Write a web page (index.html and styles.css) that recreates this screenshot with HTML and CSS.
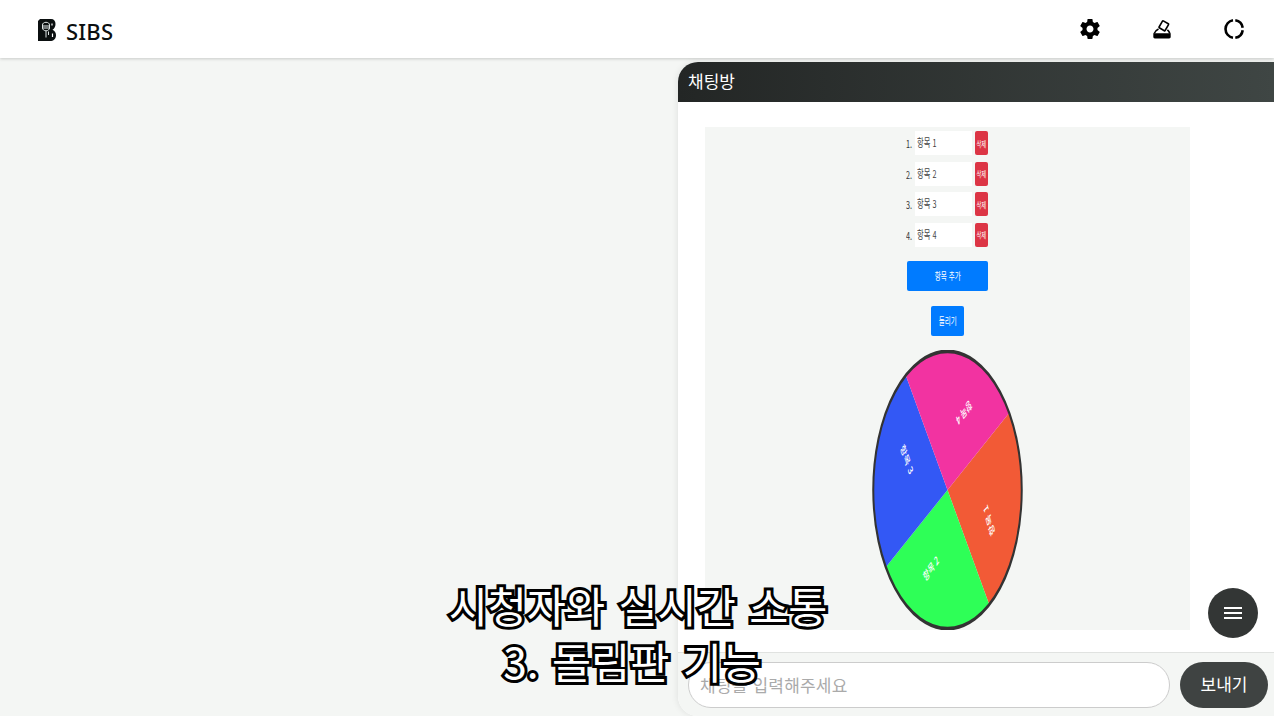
FILE: index.html
```html
<!DOCTYPE html>
<html lang="ko">
<head>
<meta charset="utf-8">
<title>SIBS</title>
<link rel="stylesheet" href="styles.css">
</head>
<body>
<header class="topbar">
  <div class="brand">
    <svg class="logo" viewBox="0 0 18 22" aria-hidden="true">
      <path d="M2 0H13C16 0 17.500 2 17.500 5C17.500 7.500 16.500 9.500 14.500 10.800C16.800 11.800 18 13.800 18 16.200C18 19.800 15.500 22 12 22H0V2Z" fill="#0b0f10"/>
      <path d="M4.500 6C4.500 4.300 6 3.300 8 3.300C10 3.300 11.500 4.300 11.500 6V9C11.500 10.500 10 11.800 8 11.800C6 11.800 4.500 10.500 4.500 9ZM4.500 7H11.500M4.500 9H11.500M8 12V18.500M10.500 12.500V16" fill="none" stroke="#dfe6e6" stroke-width="1"/>
      <path d="M14 4.500V6.500M14.500 14.500V18" fill="none" stroke="#fff" stroke-width="1.200"/>
    </svg>
    <span class="brand-name">SIBS</span>
  </div>
  <nav class="top-icons">
    <svg class="top-icon" viewBox="0 0 24 24" aria-hidden="true"><path fill="#000" fill-rule="evenodd" d="M19.430 12.980c.040-.320.070-.640.070-.980s-.030-.660-.070-.980l2.110-1.650c.190-.150.240-.420.120-.640l-2-3.460c-.120-.220-.390-.300-.610-.220l-2.490 1c-.520-.400-1.080-.730-1.690-.980l-.380-2.650C14.460 2.180 14.250 2 14 2h-4c-.250 0-.460.180-.490.420l-.380 2.650c-.610.250-1.170.590-1.690.980l-2.490-1c-.230-.090-.490 0-.610.220l-2 3.460c-.130.220-.070.490.120.640l2.110 1.650c-.040.320-.070.650-.070.980s.030.660.070.980l-2.110 1.650c-.190.150-.240.420-.120.640l2 3.460c.120.220.390.300.610.220l2.490-1c.520.400 1.080.730 1.690.980l.380 2.650c.030.240.240.420.490.420h4c.250 0 .460-.180.490-.420l.380-2.650c.610-.250 1.170-.590 1.690-.980l2.490 1c.230.090.490 0 .610-.220l2-3.460c.120-.220.070-.490-.120-.640zM12 15.500c-1.930 0-3.500-1.570-3.500-3.500s1.570-3.500 3.500-3.500 3.500 1.570 3.500 3.500-1.570 3.500-3.500 3.500z"/></svg>
    <svg class="top-icon" viewBox="0 0 24 24" aria-hidden="true">
      <rect x="10.300" y="4.800" width="7" height="8" rx=".6" transform="rotate(30 13.800 8.800)" fill="none" stroke="#000" stroke-width="1.600"/>
      <path d="M4.200 16.500C4.800 14.500 6.500 13 8.500 12M19.800 16.500C19.400 15 18.600 13.800 17.400 12.800" fill="none" stroke="#000" stroke-width="1.600"/>
      <path d="M3.300 16.300H20.700V20C20.700 20.800 20 21.400 19.200 21.400H4.800C4 21.400 3.300 20.800 3.300 20Z" fill="#000"/>
    </svg>
    <svg class="top-icon" viewBox="0 0 24 24" aria-hidden="true">
      <path d="M11 3.300A8.800 8.800 0 0 0 11 20.700" fill="none" stroke="#000" stroke-width="2.600"/>
      <path d="M13.300 3.300A8.800 8.800 0 0 1 20.700 10.800" fill="none" stroke="#000" stroke-width="2.600"/>
      <path d="M20.700 13.200A8.800 8.800 0 0 1 13.300 20.700" fill="none" stroke="#000" stroke-width="2.600"/>
    </svg>
  </nav>
</header>

<main class="stage">
  <section class="chat">
    <div class="chat-head">채팅방</div>
    <div class="chat-body">
      <div class="roulette">
        <ol class="items">
          <li class="item"><span class="num"><span class="squeeze">1.</span></span><span class="field"><span class="squeeze">항목 1</span></span><span class="del"><span class="squeeze">삭제</span></span></li>
          <li class="item"><span class="num"><span class="squeeze">2.</span></span><span class="field"><span class="squeeze">항목 2</span></span><span class="del"><span class="squeeze">삭제</span></span></li>
          <li class="item"><span class="num"><span class="squeeze">3.</span></span><span class="field"><span class="squeeze">항목 3</span></span><span class="del"><span class="squeeze">삭제</span></span></li>
          <li class="item"><span class="num"><span class="squeeze">4.</span></span><span class="field"><span class="squeeze">항목 4</span></span><span class="del"><span class="squeeze">삭제</span></span></li>
        </ol>
        <div class="btn btn-add"><span class="squeeze">항목 추가</span></div>
        <div class="btn btn-spin"><span class="squeeze">돌리기</span></div>
        <svg class="wheel" viewBox="0 0 300 300" preserveAspectRatio="none" aria-hidden="true">
          <path d="M150 150L272.700 67.200A148 148 0 0 1 232.800 272.700Z" fill="#f25a36"/>
          <path d="M150 150L232.800 272.700A148 148 0 0 1 27.300 232.800Z" fill="#2eff57"/>
          <path d="M150 150L27.300 232.800A148 148 0 0 1 67.200 27.300Z" fill="#3358f5"/>
          <path d="M150 150L67.200 27.300A148 148 0 0 1 272.700 67.200Z" fill="#f233a1"/>
          <ellipse cx="150" cy="150" rx="147.500" ry="148.500" fill="none" stroke="#333" stroke-width="4"/>
          <text class="wheel-label" transform="translate(234 182) rotate(243)">항목 1</text>
          <text class="wheel-label" transform="translate(118 235) rotate(322)">항목 2</text>
          <text class="wheel-label" transform="translate(68 118) rotate(58)">항목 3</text>
          <text class="wheel-label" transform="translate(182 66) rotate(145)">항목 4</text>
        </svg>
      </div>
    </div>
    <button class="fab" type="button" aria-label="메뉴"><span class="fab-line"></span><span class="fab-line"></span><span class="fab-line"></span></button>
    <div class="composer">
      <div class="composer-input">채팅을 입력해주세요</div>
      <div class="composer-send">보내기</div>
    </div>
  </section>
  <div class="caption">
    <div>시청자와 실시간 소통</div>
    <div class="caption-second">3. 돌림판 기능</div>
  </div>
</main>
</body>
</html>
```

FILE: styles.css
```css
* { box-sizing: border-box; }
html, body { height: 100%; }
body {
  margin: 0;
  height: 716px;
  overflow: hidden;
  display: flex;
  flex-direction: column;
  background: #f4f6f4;
  font-family: "Noto Sans CJK KR", "Noto Sans", sans-serif;
}
.topbar {
  flex: none;
  height: 58px;
  background: #fff;
  box-shadow: 0 1px 3px rgba(0, 0, 0, .18);
  display: flex;
  align-items: center;
  justify-content: space-between;
  padding: 0 28px 0 38px;
  position: relative;
  z-index: 2;
}
.brand { display: flex; align-items: center; gap: 10px; }
.logo { width: 18px; height: 22px; margin-top: 1px; }
.brand-name {
  font-family: "Noto Sans", sans-serif;
  font-size: 22px;
  font-weight: 500;
  letter-spacing: .2px;
  color: #0b0f10;
  line-height: 1;
  padding-top: 4px;
}
.top-icons { display: flex; gap: 48px; }
.top-icon { width: 24px; height: 24px; display: block; }
.stage {
  flex: 1;
  position: relative;
  display: flex;
  justify-content: flex-end;
  padding-top: 4px;
  min-height: 0;
}
.chat {
  width: 596px;
  height: 654px;
  background: #fff;
  border-radius: 20px 0 0 20px;
  box-shadow: -1px 0 6px rgba(0, 0, 0, .08);
  display: flex;
  flex-direction: column;
  position: relative;
  overflow: hidden;
}
.chat-head {
  flex: none;
  height: 40px;
  background: linear-gradient(90deg, #232625, #3f4644);
  color: #fff;
  font-size: 17px;
  line-height: 38px;
  padding-left: 10px;
}
.chat-body {
  flex: 1;
  padding: 25px 84px 22px 27px;
  min-height: 0;
}
.roulette {
  height: 503px;
  background: #f4f6f4;
  display: flex;
  flex-direction: column;
  align-items: center;
  padding-top: 4px;
}
.items {
  list-style: none;
  margin: 0 1px 0 0;
  padding: 0;
  display: flex;
  flex-direction: column;
  gap: 6.670px;
}
.item { display: flex; align-items: center; height: 24px; width: 82px; font-size: 11px; }
.num { width: 9px; color: #333; overflow: visible; }
.field {
  width: 57px;
  height: 24px;
  background: #fff;
  color: #444;
  line-height: 23px;
  padding-left: 2px;
  overflow: hidden;
  white-space: nowrap;
}
.del {
  width: 13px;
  height: 24px;
  margin-left: 3px;
  background: #dc3545;
  border-radius: 2px;
  color: #fff;
  font-size: 8px;
  display: flex;
  align-items: center;
  justify-content: center;
  overflow: hidden;
}
.squeeze { display: inline-block; transform: scaleX(.66); transform-origin: center; white-space: nowrap; }
.field .squeeze, .num .squeeze { transform-origin: left center; }
.btn {
  flex: none;
  height: 30px;
  background: #007bff;
  color: #fff;
  font-size: 10px;
  border-radius: 2px;
  display: flex;
  align-items: center;
  justify-content: center;
}
.btn-add { width: 81px; margin-top: 14px; }
.btn-spin { width: 33px; margin-top: 15px; }
.wheel { flex: none; width: 151px; height: 280px; margin: 14px 1px 0 0; display: block; }
.wheel-label {
  fill: #fff;
  font-size: 13px;
  font-weight: 500;
  text-anchor: middle;
  dominant-baseline: middle;
}
.fab {
  position: absolute;
  left: 530px;
  top: 526px;
  width: 50px;
  height: 50px;
  border: 0;
  padding: 0;
  border-radius: 50%;
  background: #333635;
  display: flex;
  flex-direction: column;
  align-items: center;
  justify-content: center;
  gap: 3px;
}
.fab-line { width: 18px; height: 2px; background: #fff; }
.composer {
  flex: none;
  height: 64px;
  background: #f4f6f4;
  border-top: 1px solid #e0e2e0;
  display: flex;
  gap: 10px;
  padding: 9px 6px 8px 10px;
}
.composer-input {
  flex: 1;
  height: 46px;
  border: 1px solid #ccc;
  border-radius: 23px;
  background: #fff;
  color: #aaa;
  font-size: 17px;
  letter-spacing: .2px;
  line-height: 43px;
  padding-left: 11px;
}
.composer-send {
  width: 88px;
  height: 46px;
  border-radius: 23px;
  background: #3f4342;
  color: #fff;
  font-size: 17px;
  line-height: 44px;
  text-align: center;
}
.caption {
  position: absolute;
  left: 338px;
  top: 519px;
  width: 600px;
  text-align: center;
  color: #fff;
  font-size: 42.500px;
  font-weight: 400;
  line-height: 56px;
  word-spacing: 1.500px;
  -webkit-text-stroke: 6px #000;
  paint-order: stroke fill;
}
.caption-second { padding-right: 12px; }
```
